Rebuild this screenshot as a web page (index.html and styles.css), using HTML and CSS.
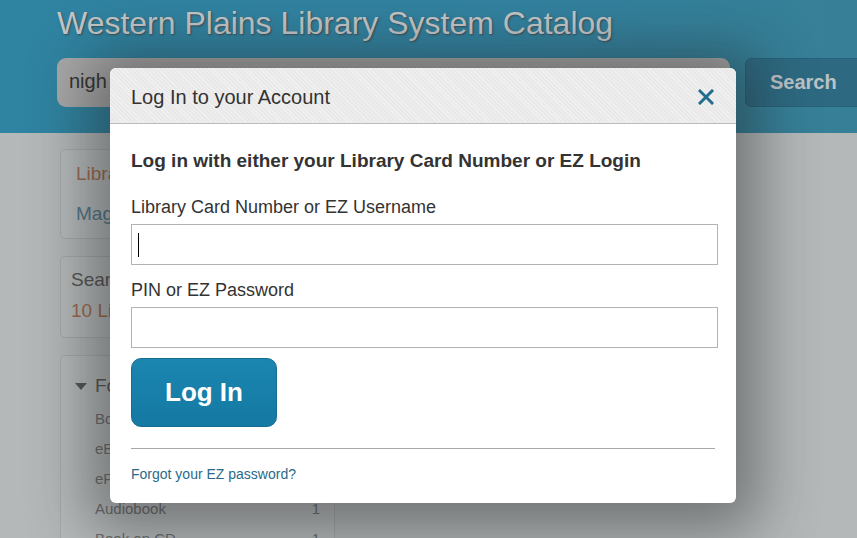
FILE: index.html
```html
<!DOCTYPE html>
<html lang="en">
<head>
    <meta charset="UTF-8">
    <title>Western Plains Library System Catalog</title>
    <link rel="stylesheet" href="styles.css">
</head>
<body>

    <div class="header">
        <h1 class="site-title">Western Plains Library System Catalog</h1>
        <div class="search-row">
            <div class="search-box">nigh</div>
            <button class="search-btn">Search</button>
        </div>
    </div>

    <div class="main">
        <div class="sidebar">
            <div class="panel links">
                <div class="side-link orange">Library Catalog</div>
                <div class="side-link blue">Magazines</div>
            </div>
            <div class="panel results">
                <div class="side-text">Search Results</div>
                <div class="side-link orange">10 Libraries</div>
            </div>
            <div class="panel facets">
                <div class="facet-head"><span class="caret"></span>Format</div>
                <div class="facet-row"><span>Book</span><span>6</span></div>
                <div class="facet-row"><span>eBook</span><span>2</span></div>
                <div class="facet-row"><span>eProduct</span><span>1</span></div>
                <div class="facet-row"><span>Audiobook</span><span>1</span></div>
                <div class="facet-row"><span>Book on CD</span><span>1</span></div>
            </div>
        </div>
    </div>

    <div class="modal">
        <div class="modal-header">
            <span class="modal-title">Log In to your Account</span>
            <span class="close">
                <svg width="16" height="16" viewBox="0 0 16 16">
                    <path d="M2 2 L14 14 M14 2 L2 14" stroke="#236d8c" stroke-width="3" stroke-linecap="square"/>
                </svg>
            </span>
        </div>
        <div class="modal-body">
            <h3 class="login-heading">Log in with either your Library Card Number or EZ Login</h3>
            <label class="field-label">Library Card Number or EZ Username</label>
            <div class="field"><span class="cursor"></span></div>
            <label class="field-label">PIN or EZ Password</label>
            <div class="field"></div>
            <button class="login-btn">Log In</button>
            <hr class="divider">
            <a class="forgot" href="#">Forgot your EZ password?</a>
        </div>
    </div>

</body>
</html>
```

FILE: styles.css
```css
body {
    margin: 0;
    width: 857px;
    height: 538px;
    overflow: hidden;
    font-family: "Liberation Sans", Arial, sans-serif;
    background: #b4b8b9;
}

.header {
    height: 133px;
    box-sizing: border-box;
    padding: 3px 0 0 57px;
    background: linear-gradient(90deg, #2f84a2 0%, #3282a0 60%, #377f96 100%);
}

.site-title {
    margin: 0;
    font-weight: normal;
    font-size: 32px;
    line-height: 40px;
    color: #c3c7c9;
    text-shadow: 1px 1px 2px #3e4c52;
}

.search-row {
    display: flex;
    gap: 15px;
    margin-top: 15px;
}

.search-box {
    width: 673px;
    flex-shrink: 0;
    height: 49px;
    box-sizing: border-box;
    padding: 12px 12px;
    border-radius: 9px;
    background: #a9a9a9;
    font-size: 20px;
    color: #333;
}

.search-btn {
    width: 115px;
    flex-shrink: 0;
    height: 49px;
    border: 1px solid #28617a;
    border-radius: 6px 0 0 6px;
    background: #2d6a82;
    color: #bcc3c6;
    font-family: "Liberation Sans", Arial, sans-serif;
    font-weight: bold;
    font-size: 20px;
    text-align: left;
    padding-left: 24px;
}

.main {
    padding: 16px 0 0 60px;
}

.sidebar {
    width: 275px;
    display: flex;
    flex-direction: column;
    gap: 17px;
}

.panel {
    border: 1px solid #a6aaab;
    border-radius: 5px;
    background: #b7bbbc;
}

.links {
    padding: 4px 15px 4px 15px;
}

.results {
    padding: 7px 10px 11px 10px;
}

.side-link, .side-text {
    font-size: 19px;
    line-height: 40px;
}

.results .side-link, .results .side-text {
    line-height: 31px;
}

.orange {
    color: #9d6a4f;
}

.blue {
    color: #4f7588;
}

.side-text {
    color: #555;
}

.facets {
    padding: 15px 14px 0 14px;
}

.facet-head {
    font-size: 19px;
    color: #555;
    line-height: 30px;
    margin-bottom: 3px;
    display: flex;
    align-items: center;
}

.caret {
    width: 0;
    height: 0;
    border-left: 6px solid transparent;
    border-right: 6px solid transparent;
    border-top: 7px solid #555;
    margin-right: 8px;
}

.facet-row {
    display: flex;
    justify-content: space-between;
    padding-left: 20px;
    font-size: 15px;
    line-height: 30px;
    color: #6a6c6d;
}

.modal {
    position: absolute;
    left: 110px;
    top: 68px;
    width: 626px;
    height: 435px;
    background: #fff;
    border-radius: 6px;
    box-shadow: 0 6px 60px 22px rgba(30, 30, 30, 0.45);
}

.modal-header {
    height: 56px;
    box-sizing: border-box;
    display: flex;
    align-items: center;
    justify-content: space-between;
    padding: 3px 22px 0 21px;
    border-radius: 6px 6px 0 0;
    border-bottom: 1px solid #bcbcbc;
    background-color: #e9e9e9;
    background-image: repeating-linear-gradient(45deg, rgba(255,255,255,0.35) 0 1px, transparent 1px 3px);
}

.modal-title {
    font-size: 20px;
    color: #333;
}

.close svg {
    display: block;
}

.modal-body {
    padding: 24px 18px 0 21px;
}

.login-heading {
    margin: 0 0 22px 0;
    font-size: 19px;
    line-height: 26px;
    color: #333;
}

.field-label {
    display: block;
    font-size: 18px;
    line-height: 22px;
    color: #333;
    margin-bottom: 6px;
}

.field {
    height: 41px;
    box-sizing: border-box;
    border: 1px solid #b3b3b3;
    margin-bottom: 14px;
    padding: 8px 6px;
}

.cursor {
    display: block;
    width: 1px;
    height: 24px;
    background: #000;
}

.login-btn {
    display: block;
    width: 146px;
    height: 69px;
    margin-top: -4px;
    border: 1px solid #146e92;
    border-radius: 10px;
    background: linear-gradient(#1b86b0, #1479a3);
    color: #fff;
    font-family: "Liberation Sans", Arial, sans-serif;
    font-weight: bold;
    font-size: 26px;
}

.divider {
    margin: 21px 3px 0 0;
    border: none;
    border-top: 1px solid #a8a8a8;
}

.forgot {
    display: block;
    margin-top: 17px;
    font-size: 14px;
    color: #2a6a8a;
    text-decoration: none;
}
```
